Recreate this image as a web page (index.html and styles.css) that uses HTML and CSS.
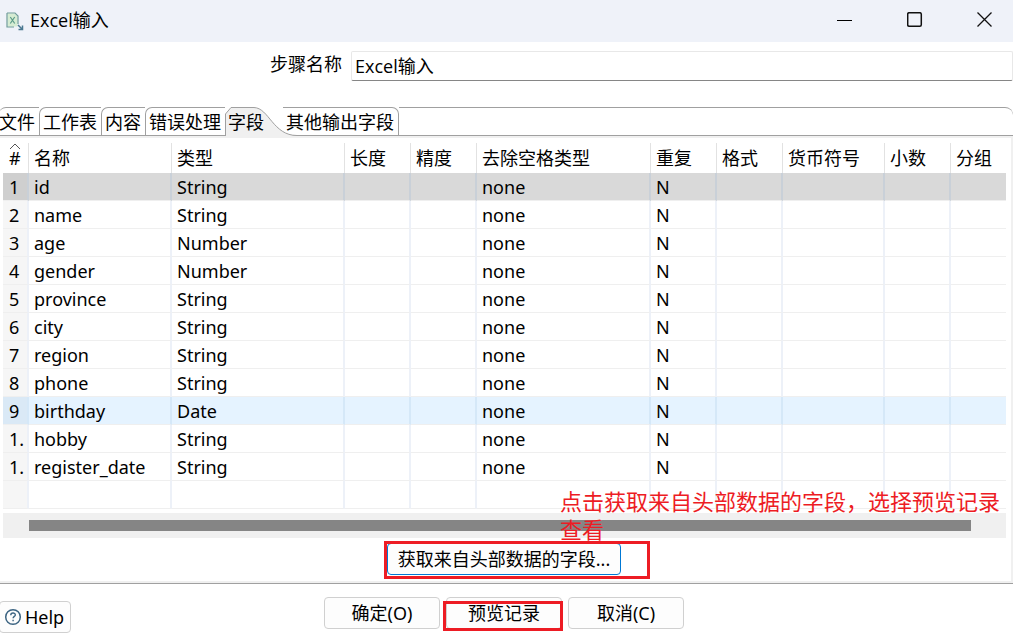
FILE: index.html
```html
<!DOCTYPE html>
<html lang="zh-CN">
<head>
<meta charset="utf-8">
<title>Excel输入</title>
<link rel="stylesheet" href="styles.css">
</head>
<body>
<div class="window">
  <header class="titlebar">
    <svg class="app-icon" width="20" height="20" viewBox="0 0 20 20" fill="none">
      <path d="M2.500 2.500h7l3 3v10h-10z" fill="#d5ecd2"/>
      <path d="M2 2h8l3 3v8M2 2v14h7" stroke="#6f9c98" stroke-width="1.200"/>
      <path d="M5.300 6l4.400 6.500M9.700 6l-4.400 6.500" stroke="#5a9a88" stroke-width="1.200"/>
      <path d="M13 14l4 4M17.500 14.500v4h-4" stroke="#4a7891" stroke-width="1.500"/>
    </svg>
    <h1 class="title">Excel输入</h1>
    <div class="window-controls">
      <button type="button" aria-label="最小化"><svg width="16" height="16" viewBox="0 0 16 16"><path d="M0 8.500h15" stroke="#000"/></svg></button>
      <button type="button" aria-label="最大化"><svg width="16" height="16" viewBox="0 0 16 16" fill="none"><rect x="0.700" y="0.700" width="13.600" height="13.600" rx="1.500" stroke="#111" stroke-width="1.500"/></svg></button>
      <button type="button" aria-label="关闭"><svg width="16" height="16" viewBox="0 0 16 16"><path d="M0.500 0.500l14 14M14.500 0.500l-14 14" stroke="#111" stroke-width="1.300"/></svg></button>
    </div>
  </header>

  <div class="step">
    <label for="step-name">步骤名称</label>
    <input id="step-name" type="text" value="Excel输入">
  </div>

  <div class="tabs" role="tablist">
    <button type="button" role="tab" class="tab tab-first">文件</button>
    <button type="button" role="tab" class="tab">工作表</button>
    <button type="button" role="tab" class="tab">内容</button>
    <button type="button" role="tab" class="tab">错误处理</button>
    <button type="button" role="tab" class="tab tab-selected" aria-selected="true">
      <svg class="tab-shape" width="75" height="29" viewBox="0 0 75 29"><path d="M0.500 29V7L6 0.500H29C44 1 48 28.500 72 28.500V29Z" fill="#f0f0f0"/><path d="M0.500 29V7L6 0.500H29C44 1 48 28.500 72 28.500H75" fill="none" stroke="#a0a0a0"/></svg>
      <span class="tab-text">字段</span>
    </button>
    <button type="button" role="tab" class="tab tab-last">其他输出字段</button>
    <span class="tab-fill"></span>
  </div>

  <main class="panel">
    <div class="grid-area">
    <table class="fields">
      <colgroup><col class="c-num"><col class="c-name"><col class="c-type"><col class="c-small"><col class="c-small"><col class="c-trim"><col class="c-small"><col class="c-small"><col class="c-money"><col class="c-small"><col></colgroup>
      <thead><tr>
        <th><svg class="sort" width="12" height="7" viewBox="0 0 12 7"><path d="M1 6l5-5 5 5" fill="none" stroke="#555"/></svg>#</th>
        <th>名称</th><th>类型</th><th>长度</th><th>精度</th><th>去除空格类型</th><th>重复</th><th>格式</th><th>货币符号</th><th>小数</th><th>分组</th>
      </tr></thead>
      <tbody>
        <tr class="selected"><td>1</td><td>id</td><td>String</td><td></td><td></td><td>none</td><td>N</td><td></td><td></td><td></td><td></td></tr>
        <tr><td>2</td><td>name</td><td>String</td><td></td><td></td><td>none</td><td>N</td><td></td><td></td><td></td><td></td></tr>
        <tr><td>3</td><td>age</td><td>Number</td><td></td><td></td><td>none</td><td>N</td><td></td><td></td><td></td><td></td></tr>
        <tr><td>4</td><td>gender</td><td>Number</td><td></td><td></td><td>none</td><td>N</td><td></td><td></td><td></td><td></td></tr>
        <tr><td>5</td><td>province</td><td>String</td><td></td><td></td><td>none</td><td>N</td><td></td><td></td><td></td><td></td></tr>
        <tr><td>6</td><td>city</td><td>String</td><td></td><td></td><td>none</td><td>N</td><td></td><td></td><td></td><td></td></tr>
        <tr><td>7</td><td>region</td><td>String</td><td></td><td></td><td>none</td><td>N</td><td></td><td></td><td></td><td></td></tr>
        <tr><td>8</td><td>phone</td><td>String</td><td></td><td></td><td>none</td><td>N</td><td></td><td></td><td></td><td></td></tr>
        <tr class="hover"><td>9</td><td>birthday</td><td>Date</td><td></td><td></td><td>none</td><td>N</td><td></td><td></td><td></td><td></td></tr>
        <tr><td>1.</td><td>hobby</td><td>String</td><td></td><td></td><td>none</td><td>N</td><td></td><td></td><td></td><td></td></tr>
        <tr><td>1.</td><td>register_date</td><td>String</td><td></td><td></td><td>none</td><td>N</td><td></td><td></td><td></td><td></td></tr>
        <tr><td></td><td></td><td></td><td></td><td></td><td></td><td></td><td></td><td></td><td></td><td></td></tr>
      </tbody>
    </table>
    <div class="scroll-track"><div class="scroll-thumb"></div></div>
    <p class="note">点击获取来自头部数据的字段，选择预览记录查看</p>
    </div>
    <div class="fetch-row">
      <div class="marked">
        <button type="button" class="btn btn-fetch">获取来自头部数据的字段...</button>
        <span class="mark mark-fetch"></span>
      </div>
    </div>
  </main>

  <footer class="footer">
    <button type="button" class="btn btn-help">
      <svg width="18" height="18" viewBox="0 0 18 18" fill="none" stroke="#3c6482"><circle cx="9" cy="9" r="7.300" stroke-width="1.500"/><path d="M6.800 7.200c0-2.900 4.500-2.700 4.500-.3 0 1.500-2.200 1.500-2.200 3.300M9.100 11.700v1.500" stroke-width="1.400"/></svg>
      Help
    </button>
    <div class="actions">
      <button type="button" class="btn">确定(O)</button>
      <div class="marked">
        <button type="button" class="btn">预览记录</button>
        <span class="mark mark-preview"></span>
      </div>
      <button type="button" class="btn">取消(C)</button>
    </div>
  </footer>
</div>
</body>
</html>
```

FILE: styles.css
```css
* { box-sizing: border-box; }
body {
  margin: 0;
  background: #fff;
  color: #000;
  font: 18px/24px "Noto Sans", "Noto Sans CJK SC", sans-serif;
}
button, input { font: inherit; color: inherit; margin: 0; }
.window { overflow: hidden; }

.titlebar {
  display: flex;
  align-items: center;
  height: 42px;
  padding: 0 0 2px 5px;
  background: #eff2f9;
}
.app-icon { margin-top: 2px; }
.title {
  margin: 0 0 0 5px;
  font: 18px/24px "Open Sans", "Noto Sans CJK SC", sans-serif;
}
.window-controls { display: flex; margin: 0 -7px 0 auto; }
.window-controls button {
  display: flex;
  align-items: center;
  justify-content: center;
  width: 70px;
  height: 38px;
  padding: 0;
  border: 0;
  background: none;
}

.step {
  display: flex;
  align-items: center;
  gap: 9px;
  padding: 9px 0 26px 270px;
}
.step label { flex: none; padding-bottom: 4px; }
.step input {
  flex: 1;
  min-width: 0;
  height: 30px;
  padding: 0 3px 2px;
  border: 1px solid #e8e8e8;
  border-bottom-color: #868686;
  border-radius: 2px;
  background: #fff;
  font-family: "Open Sans", "Noto Sans CJK SC", sans-serif;
}

.tabs { display: flex; height: 29px; }
.tab {
  position: relative;
  height: 29px;
  padding: 0 4px 0 3px;
  border: solid #a0a0a0;
  border-width: 1px 0 1px 1px;
  border-radius: 7px 0 0 0;
  background: #fff;
  white-space: nowrap;
}
.tab-first { padding-left: 0; border-left: 0; margin-left: -1px; }
.tab-selected { width: 58px; border: 0; background: none; text-align: left; }
.tab-shape { position: absolute; left: 0; top: 0; z-index: 1; }
.tab-text { position: relative; z-index: 2; }
.tab-last { border-width: 1px 1px 1px 0; border-radius: 0 7px 0 0; }
.tab-fill {
  flex: 1;
  border: solid #a0a0a0;
  border-width: 1px 0;
  border-radius: 0 8px 0 0;
}

.panel {
  border: solid #f0f0f0;
  border-width: 2px 2px 2px 0;
}
.grid-area { position: relative; padding: 5px 5px 0 3px; }
.fields { width: 100%; table-layout: fixed; border-spacing: 0; }
.c-num { width: 26px; }
.c-name { width: 143px; }
.c-type { width: 173px; }
.c-small { width: 66px; }
.c-trim { width: 174px; }
.c-money { width: 102px; }
.fields th, .fields td {
  height: 28px;
  padding: 0 0 0 5px;
  border-right: 2px solid #edf1f8;
  border-bottom: 1px solid #efefef;
  font-weight: 400;
  text-align: left;
  white-space: nowrap;
}
.fields th { position: relative; height: 30px; border-right: 1px solid #e2e2e2; border-bottom: 0; }
.fields th:first-child, .fields td:first-child { padding-left: 6px; }
.fields th:last-child, .fields td:last-child { border-right: 0; }
.fields td:first-child { background: #f6f6f6; }
.fields .selected td { background: #d9d9d9; border-right-color: #c9d0d8; }
.fields .selected td:first-child { background: #cfcfcf; }
.fields .hover td { background: #e5f3ff; border-right-color: #d5e8f8; }
.fields .hover td:first-child { background: #dae9f6; }
.sort { position: absolute; left: 6px; top: 0; }

.scroll-track {
  height: 25px;
  margin-top: 4px;
  padding: 7px 35px 7px 26px;
  background: #f0f0f0;
}
.scroll-thumb { height: 11px; background: #858585; }
.note {
  position: absolute;
  left: 560px;
  top: 349px;
  width: 444px;
  margin: 0;
  color: #ed1c24;
  font-size: 22px;
  line-height: 28px;
}

.fetch-row { display: flex; padding: 5px 0 6px 387px; }
.marked { position: relative; }
.btn {
  display: flex;
  align-items: center;
  justify-content: center;
  width: 116px;
  height: 32px;
  padding: 0;
  border: 1px solid #d0d0d0;
  border-radius: 4px;
  background: #fdfdfd;
  white-space: nowrap;
}
.btn-fetch { width: 234px; border-color: #0078d4; }
.mark { position: absolute; border: 3px solid #ed1c24; pointer-events: none; }
.mark-fetch { left: -3px; top: -2px; width: 266px; height: 38px; }
.mark-preview { left: -3px; top: 4px; width: 120px; height: 30px; }

.footer {
  display: grid;
  grid-template-columns: 324px 1fr;
  align-items: start;
  padding-top: 13px;
  border-top: 1px solid #a0a0a0;
}
.btn-help {
  width: 72px;
  gap: 3px;
  padding-right: 2px;
  margin: 4px 0 4px -1px;
}
.actions { display: flex; gap: 6px; }
```
